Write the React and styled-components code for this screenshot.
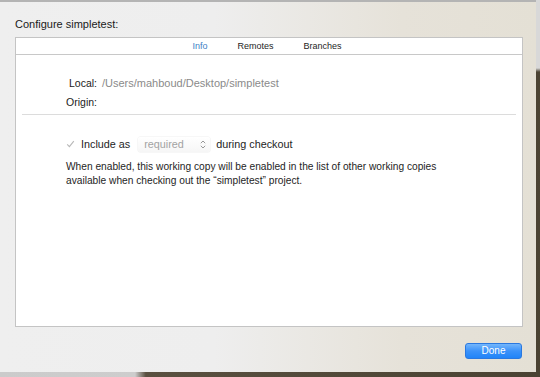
import React from 'react'
import styled, { createGlobalStyle } from 'styled-components'

const GlobalStyle = createGlobalStyle`
  html, body {
    margin: 0;
    padding: 0;
  }
  body {
    font-family: "Liberation Sans", Arial, sans-serif;
    -webkit-font-smoothing: antialiased;
  }
`

const Desktop = styled.div`
  width: 540px;
  height: 377px;
  overflow: hidden;
  display: flex;
  flex-direction: column;
  background:
    linear-gradient(to right, #cbcbcb 0%, #cdcdcd 25%, #5a5040 27%, #4a4232 100%) bottom / 100% 5px no-repeat,
    linear-gradient(to bottom, #d8d8d8 0px, #d8d8d8 68px, #4c4434 72px, #4a4232 100%);
`

const Sheet = styled.div`
  width: 536px;
  height: 372px;
  box-sizing: border-box;
  border-top: 2px solid #b4b4b4;
  background: linear-gradient(to right, #efefef 0%, #eeeeee 40%, #e6e2d9 75%, #e4e0d5 100%);
  display: flex;
  flex-direction: column;
  padding: 14px 14px 0 15px;
`

const Title = styled.div`
  font-size: 11px;
  color: #1a1a1a;
  height: 21px;
  line-height: 16px;
`

const Panel = styled.div`
  width: 508px;
  height: 290px;
  box-sizing: border-box;
  background: #fff;
  border: 1px solid #c4c4c4;
  display: flex;
  flex-direction: column;
`

const TabBar = styled.div`
  height: 16px;
  border-bottom: 1px solid #c8c8c8;
  display: flex;
  justify-content: center;
  align-items: center;
  padding-right: 4px;
`

const Tab = styled.div`
  font-size: 9px;
  padding: 0 15px;
  color: ${p => (p.$active ? '#3f7fc6' : '#1e1e1e')};
`

const Info = styled.div`
  display: grid;
  grid-template-columns: 81px 1fr;
  column-gap: 5px;
  row-gap: 8px;
  padding: 23px 0 0 0;
  font-size: 10.5px;
`

const Label = styled.div`
  text-align: right;
  color: #222;
  line-height: 11px;
`

const Value = styled.div`
  color: #8a8a8a;
  font-size: 11px;
  line-height: 11px;
`

const Separator = styled.div`
  height: 1px;
  background: #dcdcdc;
  margin: 6px 6px 0 6px;
`

const Options = styled.div`
  padding: 22px 0 0 50px;
  display: flex;
  flex-direction: column;
  gap: 9px;
  color: #1e1e1e;
`

const CheckRow = styled.div`
  display: flex;
  align-items: center;
  height: 14px;
  font-size: 10.8px;
`

const Check = styled.span`
  width: 13px;
  display: inline-flex;
  align-items: center;
  margin-right: 2px;
`

const Popup = styled.div`
  display: flex;
  align-items: center;
  justify-content: space-between;
  width: 72px;
  height: 15px;
  margin: 0 6px 0 8px;
  padding: 0 4px 0 6px;
  box-sizing: border-box;
  background: linear-gradient(#ffffff, #f6f6f6);
  border-radius: 2px;
  box-shadow: 0 0 0 0.5px #f0f0f0;
  color: #a3a3a3;
`

const Description = styled.div`
  font-size: 10.2px;
  line-height: 14px;
`

const Footer = styled.div`
  flex: 1;
  display: flex;
  justify-content: flex-end;
  align-items: flex-start;
  padding-top: 16px;
`

const DoneButton = styled.button`
  width: 57px;
  height: 16px;
  border: 1px solid #2a78e0;
  border-radius: 3px;
  background: linear-gradient(#74b6fb, #3b92fa 50%, #2184f8);
  color: #fff;
  font-family: "Liberation Sans", Arial, sans-serif;
  font-size: 10px;
  padding: 0;
  line-height: 14px;
`

const Chevrons = () => (
  <svg width="6" height="9" viewBox="0 0 6 9">
    <path d="M0.8 3.2 L3 1 L5.2 3.2 M0.8 5.8 L3 8 L5.2 5.8" fill="none" stroke="#8c8c8c" strokeWidth="0.9" />
  </svg>
)

const CheckMark = () => (
  <svg width="9" height="8" viewBox="0 0 9 8">
    <path d="M1.2 4.4 L3.4 6.6 L7.8 1.2" fill="none" stroke="#b8b8b8" strokeWidth="1.1" />
  </svg>
)

export default function App () {
  return (
    <>
      <GlobalStyle />
      <Desktop>
        <Sheet>
          <Title>Configure simpletest:</Title>
          <Panel>
            <TabBar>
              <Tab $active>Info</Tab>
              <Tab>Remotes</Tab>
              <Tab>Branches</Tab>
            </TabBar>
            <Info>
              <Label>Local:</Label>
              <Value>/Users/mahboud/Desktop/simpletest</Value>
              <Label>Origin:</Label>
              <Value />
            </Info>
            <Separator />
            <Options>
              <CheckRow>
                <Check><CheckMark /></Check>
                Include as
                <Popup>required<Chevrons /></Popup>
                during checkout
              </CheckRow>
              <Description>
                When enabled, this working copy will be enabled in the list of other working copies
                <br />
                available when checking out the “simpletest” project.
              </Description>
            </Options>
          </Panel>
          <Footer>
            <DoneButton>Done</DoneButton>
          </Footer>
        </Sheet>
      </Desktop>
    </>
  )
}
